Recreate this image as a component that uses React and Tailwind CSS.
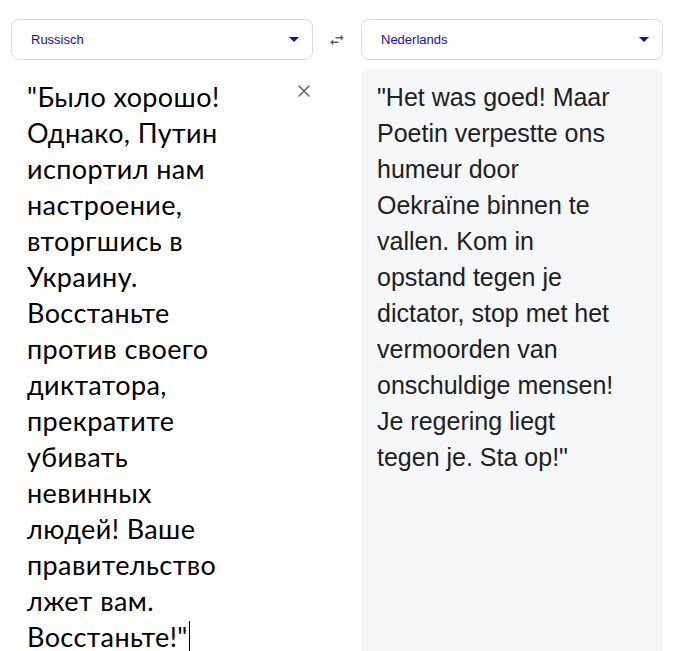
import { X } from "lucide-react";

const sourceLines = [
  '"Было хорошо!',
  "Однако, Путин",
  "испортил нам",
  "настроение,",
  "вторгшись в",
  "Украину.",
  "Восстаньте",
  "против своего",
  "диктатора,",
  "прекратите",
  "убивать",
  "невинных",
  "людей! Ваше",
  "правительство",
  "лжет вам.",
];

const targetLines = [
  '"Het was goed! Maar',
  "Poetin verpestte ons",
  "humeur door",
  "Oekraïne binnen te",
  "vallen. Kom in",
  "opstand tegen je",
  "dictator, stop met het",
  "vermoorden van",
  "onschuldige mensen!",
  "Je regering liegt",
  'tegen je. Sta op!"',
];

function LangSelect({ label }) {
  return (
    <div className="flex h-[41px] w-[302px] items-center justify-between rounded-lg border border-[#dadce0] bg-white pl-[19px] pr-[13px]">
      <span className="text-[13px] text-[#1a0dab] font-['Liberation_Sans',Arial,sans-serif]">{label}</span>
      <svg width="10" height="5" viewBox="0 0 10 5">
        <path d="M0 0h10L5 5z" fill="#1a0dab" />
      </svg>
    </div>
  );
}

function SwapIcon() {
  return (
    <svg width="18" height="18" viewBox="0 0 24 24" fill="#5f6368">
      <path d="M6.99 11L3 15l3.99 4v-3H14v-2H6.99v-3zM21 9l-3.99-4v3H10v2h7.01v3L21 9z" />
    </svg>
  );
}

export default function App() {
  return (
    <div className="h-[651px] w-[676px] overflow-hidden bg-white">
      <div className="flex items-center pl-[11px] pt-[19px]">
        <LangSelect label="Russisch" />
        <div className="flex w-[48px] justify-center">
          <SwapIcon />
        </div>
        <LangSelect label="Nederlands" />
      </div>

      <div className="mt-[8px] flex">
        <div className="flex w-[361px] pl-[27px] pt-[11px]">
          <div className="flex-1 text-[27px] leading-[36px] tracking-[0.4px] text-black font-['Lato','Noto_Sans',sans-serif]">
            {sourceLines.map((line) => (
              <div key={line} className="whitespace-nowrap">{line}</div>
            ))}
            <div className="flex items-center whitespace-nowrap">
              Восстаньте!"
              <span className="ml-[1px] inline-block h-[33px] w-[1px] bg-black" />
            </div>
          </div>
          <div className="pr-[47px] pt-[2px]">
            <X size={20} strokeWidth={1.8} color="#5f6368" />
          </div>
        </div>

        <div className="h-[600px] w-[302px] rounded-t-lg bg-[#f6f7f9] pl-[16px] pt-[11px] text-[25px] leading-[36px] text-[#202124] font-['Liberation_Sans',Arial,sans-serif]">
          {targetLines.map((line) => (
            <div key={line} className="whitespace-nowrap">{line}</div>
          ))}
        </div>
      </div>
    </div>
  );
}
